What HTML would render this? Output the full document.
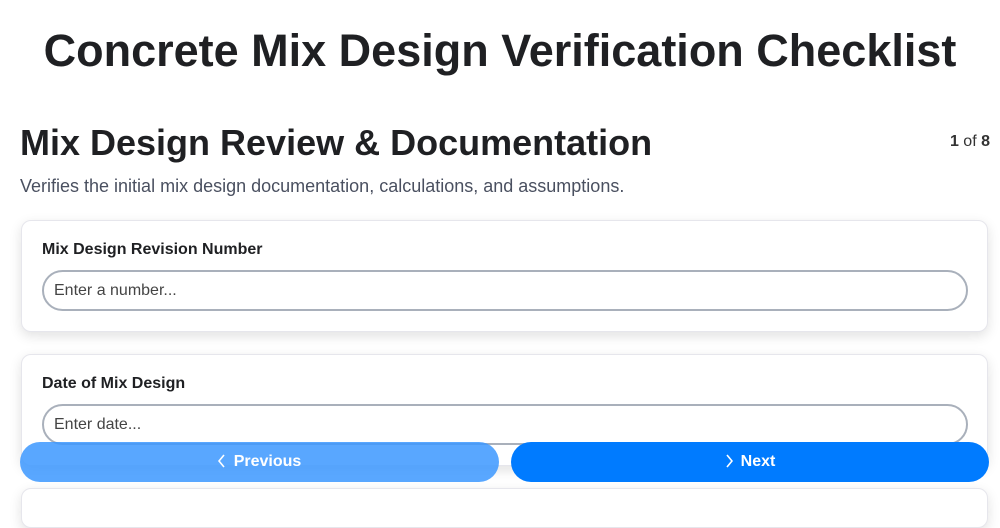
<!DOCTYPE html><html><head><style>
*{box-sizing:border-box}body{margin:0;width:1000px;height:500px;overflow:hidden;background:#fff;font-family:"Liberation Sans",sans-serif;color:#1f2023;position:relative}
h1{position:absolute;top:25px;left:0;width:1000px;text-align:center;margin:0;font-size:45px;font-weight:bold}
h2{position:absolute;top:122px;left:20px;margin:0;font-size:36px}
.pg{position:absolute;top:133px;right:10px;font-size:16px;color:#333}
.desc{position:absolute;top:176px;left:20px;font-size:18px;color:#4a5060}
.card{position:absolute;left:21px;width:967px;background:#fff;border:1px solid #e6e6ec;border-radius:10px;box-shadow:0 4px 12px rgba(0,0,0,.12)}
.lab{position:absolute;left:20px;font-size:16px;font-weight:bold}
.inp{position:absolute;left:20px;width:926px;height:41px;border:2px solid #a9b0bb;border-radius:21px;padding:0 10px;line-height:37px;font-size:16px;color:#444}
.btn{position:absolute;top:442px;height:40px;border-radius:20px;color:#fff;font-weight:bold;font-size:16px;text-align:center;line-height:40px}
.btn svg{vertical-align:-2px;margin-right:8px}
</style></head><body>
<h1>Concrete Mix Design Verification Checklist</h1>
<h2>Mix Design Review &amp; Documentation</h2>
<div class="pg"><b>1</b> of <b>8</b></div>
<div class="desc">Verifies the initial mix design documentation, calculations, and assumptions.</div>
<div class="card" style="top:220px;height:112px"><div class="lab" style="top:20px">Mix Design Revision Number</div><div class="inp" style="top:49px">Enter a number...</div></div>
<div class="card" style="top:354px;height:112px"><div class="lab" style="top:20px">Date of Mix Design</div><div class="inp" style="top:49px">Enter date...</div></div>
<div class="card" style="top:488px;height:40px"></div>
<div class="btn" style="left:20px;width:479px;background:rgba(60,152,255,.85)"><svg width="8" height="14" viewBox="0 0 8 14"><path d="M6 1L1 7l5 6" fill="none" stroke="#fff" stroke-width="1.6"/></svg>Previous</div>
<div class="btn" style="left:511px;width:478px;background:#007bff"><svg width="8" height="14" viewBox="0 0 8 14"><path d="M2 1l5 6-5 6" fill="none" stroke="#fff" stroke-width="1.6"/></svg>Next</div>
</body></html>
